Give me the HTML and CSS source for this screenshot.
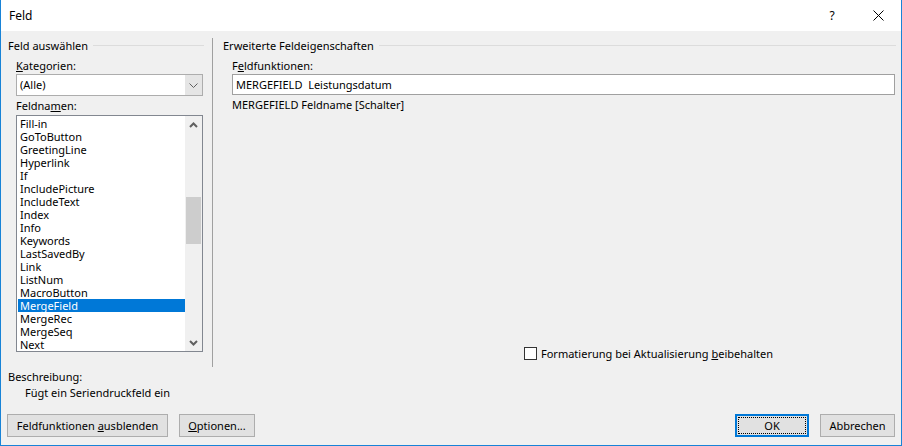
FILE: index.html
```html
<!DOCTYPE html>
<html lang="de">
<head>
  <meta charset="UTF-8" />
  <title>Feld</title>
  <link rel="stylesheet" href="styles.css">
</head>
<body>
  <div class="dialog">
    <div class="titlebar">
      <span class="title">Feld</span>
      <span class="title-btn">?</span>
      <span class="title-btn">
        <svg width="11" height="11" viewBox="0 0 11 11"><path d="M0.5 0.5 L10.5 10.5 M10.5 0.5 L0.5 10.5" stroke="#000" stroke-width="1" fill="none"/></svg>
      </span>
    </div>

    <div class="main">
      <div class="group group-left">
        <div class="legend"><span>Feld auswählen</span><span class="legend-line"></span></div>
        <div class="group-body">
          <div class="label"><u>K</u>ategorien:</div>
          <div class="combo">
            <span class="combo-value">(Alle)</span>
            <span class="combo-btn">
              <svg width="9" height="5" viewBox="0 0 9 5"><path d="M0.5 0.5 L4.5 4.5 L8.5 0.5" stroke="#606060" stroke-width="1" fill="none"/></svg>
            </span>
          </div>
          <div class="label">Feldna<u>m</u>en:</div>
          <div class="listbox">
            <ul class="items">
              <li>Fill-in</li>
              <li>GoToButton</li>
              <li>GreetingLine</li>
              <li>Hyperlink</li>
              <li>If</li>
              <li>IncludePicture</li>
              <li>IncludeText</li>
              <li>Index</li>
              <li>Info</li>
              <li>Keywords</li>
              <li>LastSavedBy</li>
              <li>Link</li>
              <li>ListNum</li>
              <li>MacroButton</li>
              <li class="selected">MergeField</li>
              <li>MergeRec</li>
              <li>MergeSeq</li>
              <li>Next</li>
            </ul>
            <div class="scrollbar">
              <span class="sb-arrow">
                <svg width="9" height="6" viewBox="0 0 9 6"><path d="M1 5 L4.5 1.5 L8 5" stroke="#606060" stroke-width="2" fill="none"/></svg>
              </span>
              <span class="sb-track"><span class="sb-thumb"></span></span>
              <span class="sb-arrow">
                <svg width="9" height="6" viewBox="0 0 9 6"><path d="M1 1 L4.5 4.5 L8 1" stroke="#606060" stroke-width="2" fill="none"/></svg>
              </span>
            </div>
          </div>
        </div>
      </div>

      <div class="separator"></div>

      <div class="group group-right">
        <div class="legend"><span>Erweiterte Feldeigenschaften</span><span class="legend-line"></span></div>
        <div class="group-body">
          <div class="label">F<u>e</u>ldfunktionen:</div>
          <div class="textbox">MERGEFIELD  Leistungsdatum</div>
          <div class="syntax">MERGEFIELD Feldname [Schalter]</div>
          <label class="check-row"><span class="checkbox"></span><span>Formatierung bei Aktualisierung <u>b</u>eibehalten</span></label>
        </div>
      </div>
    </div>

    <div class="description">
      <div>Beschreibung:</div>
      <div class="description-text">Fügt ein Seriendruckfeld ein</div>
    </div>

    <div class="buttons">
      <button class="btn btn-wide"><span>Feldfunktionen <u>a</u>usblenden</span></button>
      <button class="btn btn-options"><span><u>O</u>ptionen...</span></button>
      <span class="spacer"></span>
      <button class="btn btn-default"><span class="focus">OK</span></button>
      <button class="btn btn-cancel"><span>Abbrechen</span></button>
    </div>
  </div>
</body>
</html>
```

FILE: styles.css
```css
* {
  box-sizing: border-box; margin: 0; padding: 0;
}

body {
  font-family: "Noto Sans", sans-serif;
  font-size: 11px;
  color: #000;
  background: #fff;
}

u {
  text-decoration: underline;
  text-underline-offset: 1px;
}

.dialog {
  width: 902px;
  height: 446px;
  border: 1px solid #1883d7;
  border-top: none;
  background: #f0f0f0;
  display: flex;
  flex-direction: column;
}

/* title bar */
.titlebar {
  height: 31px;
  background: #fff;
  display: flex;
  align-items: center;
}

.title {
  flex: 1;
  padding-left: 8px;
  line-height: 15px;
  font-size: 12px;
}

.title-btn {
  width: 46px;
  height: 31px;
  display: flex;
  align-items: center;
  justify-content: center;
  font-size: 12px;
}

/* main area */
.main {
  height: 336px;
  display: flex;
}

.group {
  display: flex;
  flex-direction: column;
  padding-top: 7px;
}

.group-left {
  width: 196px;
  margin-left: 7px;
}

.group-right {
  width: 673px;
  margin-left: 10px;
}

.legend {
  display: flex;
  align-items: center;
  gap: 5px;
  line-height: 15px;
}

.legend-line {
  flex: 1;
  height: 1px;
  background: #dcdcdc;
}

.group-body {
  flex: 1;
  display: flex;
  flex-direction: column;
  padding-left: 8px;
  padding-right: 1px;
}

.group-right .group-body {
  padding-left: 9px;
  padding-bottom: 6px;
}

.label {
  line-height: 15px;
  margin-top: 5px;
  margin-bottom: 1px;
}

.group-left .label + .listbox {
  margin-top: 1px;
}

.separator {
  width: 1px;
  margin-left: 8px;
  margin-top: 7px;
  background: #a0a0a0;
}

/* combobox */
.combo {
  height: 22px;
  border: 1px solid #adadad;
  background: #fff;
  display: flex;
}

.combo-value {
  flex: 1;
  padding-left: 3px;
  line-height: 20px;
}

.combo-btn {
  width: 17px;
  background: #e5e5e5;
  display: flex;
  align-items: center;
  justify-content: center;
}

.group-left .combo + .label {
  margin-top: 2px;
}

/* listbox */
.listbox {
  height: 237px;
  border: 1px solid #828790;
  background: #fff;
  display: flex;
  overflow: hidden;
}

.items {
  flex: 1;
  list-style: none;
  padding: 1px 0 0 1px;
}

.items li {
  height: 13px;
  line-height: 13px;
  padding-left: 2px;
  white-space: nowrap;
}

.items li.selected {
  background: #0078d7;
  color: #fff;
}

.scrollbar {
  width: 17px;
  background: #f0f0f0;
  display: flex;
  flex-direction: column;
}

.sb-arrow {
  height: 17px;
  display: flex;
  align-items: center;
  justify-content: center;
}

.sb-track {
  flex: 1;
  padding: 0 1px;
}

.sb-thumb {
  display: block;
  height: 47px;
  margin-top: 64px;
  background: #cdcdcd;
}

/* right side */
.textbox {
  height: 21px;
  border: 1px solid #a0a0a0;
  background: #fff;
  padding-left: 3px;
  line-height: 19px;
  white-space: pre;
}

.syntax {
  margin-top: 2px;
  line-height: 15px;
}

.check-row {
  margin-top: auto;
  margin-left: 292px;
  display: flex;
  align-items: center;
  gap: 4px;
  line-height: 15px;
}

.checkbox {
  width: 13px;
  height: 13px;
  border: 1px solid #333;
  background: #fff;
}

/* description */
.description {
  padding-top: 2px;
  padding-left: 7px;
  line-height: 16px;
}

.description-text {
  padding-left: 17px;
}

/* button bar */
.buttons {
  margin-top: 13px;
  height: 23px;
  display: flex;
  gap: 11px;
  padding: 0 6px;
}

.spacer {
  flex: 1;
}

.btn {
  font: inherit;
  color: #000;
  background: #e1e1e1;
  border: 1px solid #adadad;
  height: 23px;
  display: flex;
  align-items: center;
  justify-content: center;
  white-space: nowrap;
}

.btn-wide {
  width: 161px;
}

.btn-options {
  width: 76px;
}

.btn-default {
  width: 74px;
  border: 2px solid #0078d7;
  padding: 1px;
}

.focus {
  flex: 1;
  align-self: stretch;
  display: flex;
  align-items: center;
  justify-content: center;
  border: 1px dotted #000;
}

.btn-cancel {
  width: 75px;
}
```
